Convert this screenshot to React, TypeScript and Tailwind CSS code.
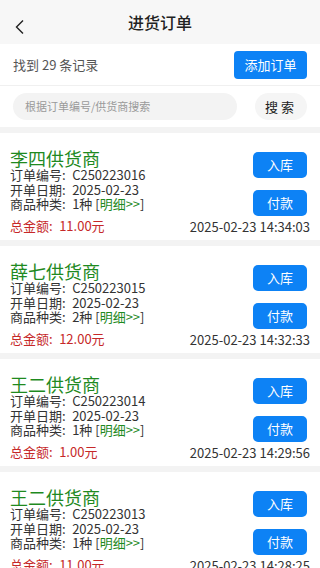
import React from "react";

const orders = [
  { name: "李四供货商", no: "C250223016", date: "2025-02-23", kinds: "1种", total: "11.00元", time: "2025-02-23 14:34:03" },
  { name: "薛七供货商", no: "C250223015", date: "2025-02-23", kinds: "2种", total: "12.00元", time: "2025-02-23 14:32:33" },
  { name: "王二供货商", no: "C250223014", date: "2025-02-23", kinds: "1种", total: "1.00元", time: "2025-02-23 14:29:56" },
  { name: "王二供货商", no: "C250223013", date: "2025-02-23", kinds: "1种", total: "11.00元", time: "2025-02-23 14:28:25" },
];

export default function App() {
  return (
    <div
      className="w-[320px] h-[568px] overflow-hidden bg-[#f3f3f3]"
      style={{ fontFamily: '"Noto Sans CJK SC", "Noto Sans", sans-serif' }}
    >
      <div className="h-[44px] bg-[#f7f7f7] flex items-center relative">
        <svg className="absolute left-[14px] top-[19px]" width="12" height="16" viewBox="0 0 12 16">
          <path d="M9 1.5 L2.5 8 L9 14.5" fill="none" stroke="#222" strokeWidth="1.4" />
        </svg>
        <div className="w-full text-center text-[16px] font-medium text-[#222]">进货订单</div>
      </div>
      <div className="h-[42px] bg-white flex items-center justify-between pl-[13px] pr-[13px] border-b border-[#f0f0f0]">
        <span className="text-[13px] text-[#555]">找到 29 条记录</span>
        <button className="w-[73px] h-[28px] rounded-[4px] bg-[#0d82f5] text-white text-[13px]">添加订单</button>
      </div>
      <div className="h-[41px] bg-white flex items-center pl-[13px] pr-[13px] gap-[18px]">
        <div className="w-[224px] h-[27px] rounded-full bg-[#f3f3f3] flex items-center pl-[12px] text-[11px] text-[#9a9a9a]">
          根据订单编号/供货商搜索
        </div>
        <button className="w-[52px] h-[27px] rounded-full bg-[#f5f5f5] text-[13px] text-[#222] tracking-[3px]">搜索</button>
      </div>
      <div className="flex flex-col gap-[6px] pt-[6px]">
        {orders.map((o, i) => (
          <div key={i} className="h-[107px] bg-white flex justify-between pl-[10px] pr-[10px]">
            <div className="pt-[16px]">
              <div className="text-[18px] leading-[19px] text-[#1f8a1f]">{o.name}</div>
              <div className="text-[13px] leading-[14.5px] text-[#333]">
                <div>订单编号:{"\u2002"}{o.no}</div>
                <div>开单日期:{"\u2002"}{o.date}</div>
                <div>
                  商品种类:{"\u2002"}{o.kinds} [<span className="text-[#1f8a1f]">明细&gt;&gt;</span>]
                </div>
              </div>
              <div className="mt-[6.5px] text-[13px] leading-[16px] text-[#c62828]">总金额:{"\u2002"}{o.total}</div>
            </div>
            <div className="pt-[19px] flex flex-col items-end">
              <button className="mr-[3px] w-[54px] h-[26px] rounded-[5px] bg-[#0d82f5] text-white text-[13px]">入库</button>
              <button className="mr-[3px] mt-[12px] w-[54px] h-[26px] rounded-[5px] bg-[#0d82f5] text-white text-[13px]">付款</button>
              <div className="mt-[3px] text-[13px] leading-[16px] text-[#333]">{o.time}</div>
            </div>
          </div>
        ))}
      </div>
    </div>
  );
}
